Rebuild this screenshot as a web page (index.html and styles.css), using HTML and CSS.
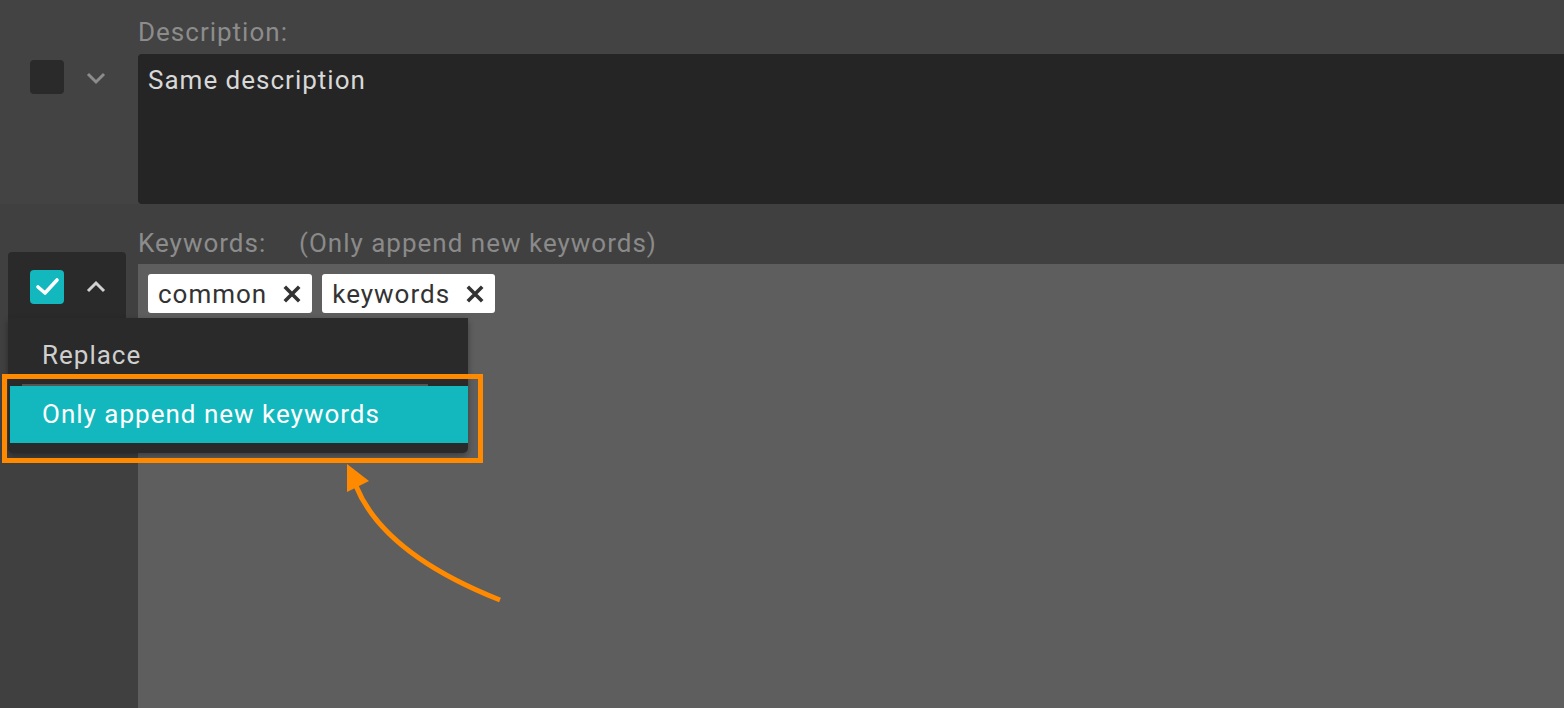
FILE: index.html
```html
<!DOCTYPE html>
<html lang="en">
<head>
<meta charset="utf-8">
<title>Metadata editor</title>
<link rel="stylesheet" href="styles.css">
</head>
<body>
<div class="page">
  <section class="row row-desc">
    <div class="gutter">
      <div class="toggle">
        <span class="checkbox"></span>
        <svg class="chevron chevron-down" width="20" height="14" viewBox="0 0 20 14"><polyline points="2,3 10,11 18,3" fill="none" stroke="currentColor" stroke-width="3"/></svg>
      </div>
    </div>
    <div class="field">
      <div class="label">Description:</div>
      <div class="textbox">Same description</div>
    </div>
  </section>
  <section class="row row-keys">
    <div class="gutter">
      <div class="toggle-panel">
        <div class="toggle">
          <span class="checkbox checked">
            <svg width="34" height="34" viewBox="0 0 34 34"><polyline points="8,17 15,23 27,10" fill="none" stroke="#fff" stroke-width="3.6" stroke-linecap="round" stroke-linejoin="round"/></svg>
          </span>
          <svg class="chevron chevron-up" width="20" height="14" viewBox="0 0 20 14"><polyline points="2,11 10,3 18,11" fill="none" stroke="currentColor" stroke-width="3"/></svg>
        </div>
        <div class="menu">
          <div class="menu-item">Replace</div>
          <div class="menu-sep"></div>
          <div class="menu-item selected">Only append new keywords</div>
        </div>
      </div>
    </div>
    <div class="field field-grow">
      <div class="label"><span class="label-name">Keywords:</span><span class="hint">(Only append new keywords)</span></div>
      <div class="tagbox">
        <span class="tag">common<svg class="x" width="18" height="18" viewBox="0 0 18 18"><path d="M1.8 1.8 L16.2 16.2 M16.2 1.8 L1.8 16.2" stroke="#333" stroke-width="3.6"/></svg></span>
        <span class="tag">keywords<svg class="x" width="18" height="18" viewBox="0 0 18 18"><path d="M1.8 1.8 L16.2 16.2 M16.2 1.8 L1.8 16.2" stroke="#333" stroke-width="3.6"/></svg></span>
      </div>
    </div>
  </section>
</div>
<svg class="annotation" width="1564" height="708" viewBox="0 0 1564 708">
  <rect x="4.5" y="376.5" width="476" height="84" fill="none" stroke="#ff8a00" stroke-width="5"/>
  <path d="M500 600 Q384 554 356 486" fill="none" stroke="#ff8a00" stroke-width="5"/>
  <polygon points="347,464 347,492 369,481" fill="#ff8a00"/>
</svg>
</body>
</html>
```
FILE: styles.css
```css
html, body {
  margin: 0;
  padding: 0;
}
body {
  width: 1564px;
  height: 708px;
  overflow: hidden;
  background: #424242;
  font-family: Roboto, "Noto Sans", sans-serif;
  font-size: 26px;
  line-height: 30px;
  letter-spacing: 1px;
  position: relative;
}
.page {
  display: flex;
  flex-direction: column;
  height: 708px;
}
.row {
  display: grid;
  grid-template-columns: 138px 1fr;
}
.row-desc {
  height: 204px;
  background: #434343;
}
.row-keys {
  flex: 1;
  background: #404040;
}
.gutter {
  display: flex;
  flex-direction: column;
}
.row-desc .gutter {
  padding: 60px 0 0 30px;
}
.toggle {
  display: flex;
  align-items: center;
  gap: 22px;
}
.checkbox {
  width: 34px;
  height: 34px;
  border-radius: 4px;
  background: #2a2a2a;
  display: block;
  flex: none;
}
.checkbox svg {
  display: block;
}
.checkbox.checked {
  background: #12b8bd;
}
.chevron {
  display: block;
  flex: none;
}
.chevron-down {
  color: #8c8c8c;
  margin-top: 1px;
}
.chevron-up {
  color: #d2d2d2;
  margin-top: -1px;
}
.row-keys .gutter {
  padding: 48px 12px 0 8px;
}
.toggle-panel {
  position: relative;
  height: 66px;
  background: #2a2a2a;
  border-radius: 4px 4px 0 0;
  box-sizing: border-box;
  padding: 18px 0 0 22px;
}
.menu {
  position: absolute;
  top: 66px;
  left: 0;
  width: 460px;
  background: #2a2a2a;
  border-radius: 0 0 5px 5px;
  box-shadow: 0 3px 6px rgba(0, 0, 0, 0.35);
  padding: 0 0 10px 0;
  z-index: 2;
}
.menu-item {
  color: #cfcfcf;
  padding: 22px 0 14px 34px;
}
.menu-sep {
  height: 2px;
  background: #555;
  margin: 0 40px 0 14px;
}
.menu-item.selected {
  background: #12b8bd;
  color: #fff;
  margin-left: 2px;
  padding: 13px 0 14px 32px;
}
.field {
  display: flex;
  flex-direction: column;
}
.row-desc .field {
  padding-top: 17px;
}
.row-keys .field {
  padding-top: 24px;
}
.label {
  color: #8c8c8c;
  height: 30px;
  white-space: nowrap;
}
.label-name {
  display: inline-block;
  width: 161px;
}
.hint {
  color: #8a8a8a;
}
.textbox {
  margin-top: 7px;
  height: 150px;
  box-sizing: border-box;
  background: #252525;
  border-radius: 4px 0 0 4px;
  color: #d8d8d8;
  padding: 11px 10px;
}
.tagbox {
  margin-top: 6px;
  flex: 1;
  background: #5e5e5e;
  padding: 10px;
  display: flex;
  align-items: flex-start;
  gap: 10px;
}
.tag {
  display: inline-flex;
  align-items: center;
  height: 39px;
  box-sizing: border-box;
  padding: 0 11px 0 10px;
  background: #fff;
  border-radius: 3px;
  color: #333;
  gap: 16px;
}
.x {
  display: block;
}
.annotation {
  position: absolute;
  left: 0;
  top: 0;
  pointer-events: none;
  z-index: 5;
}
```
